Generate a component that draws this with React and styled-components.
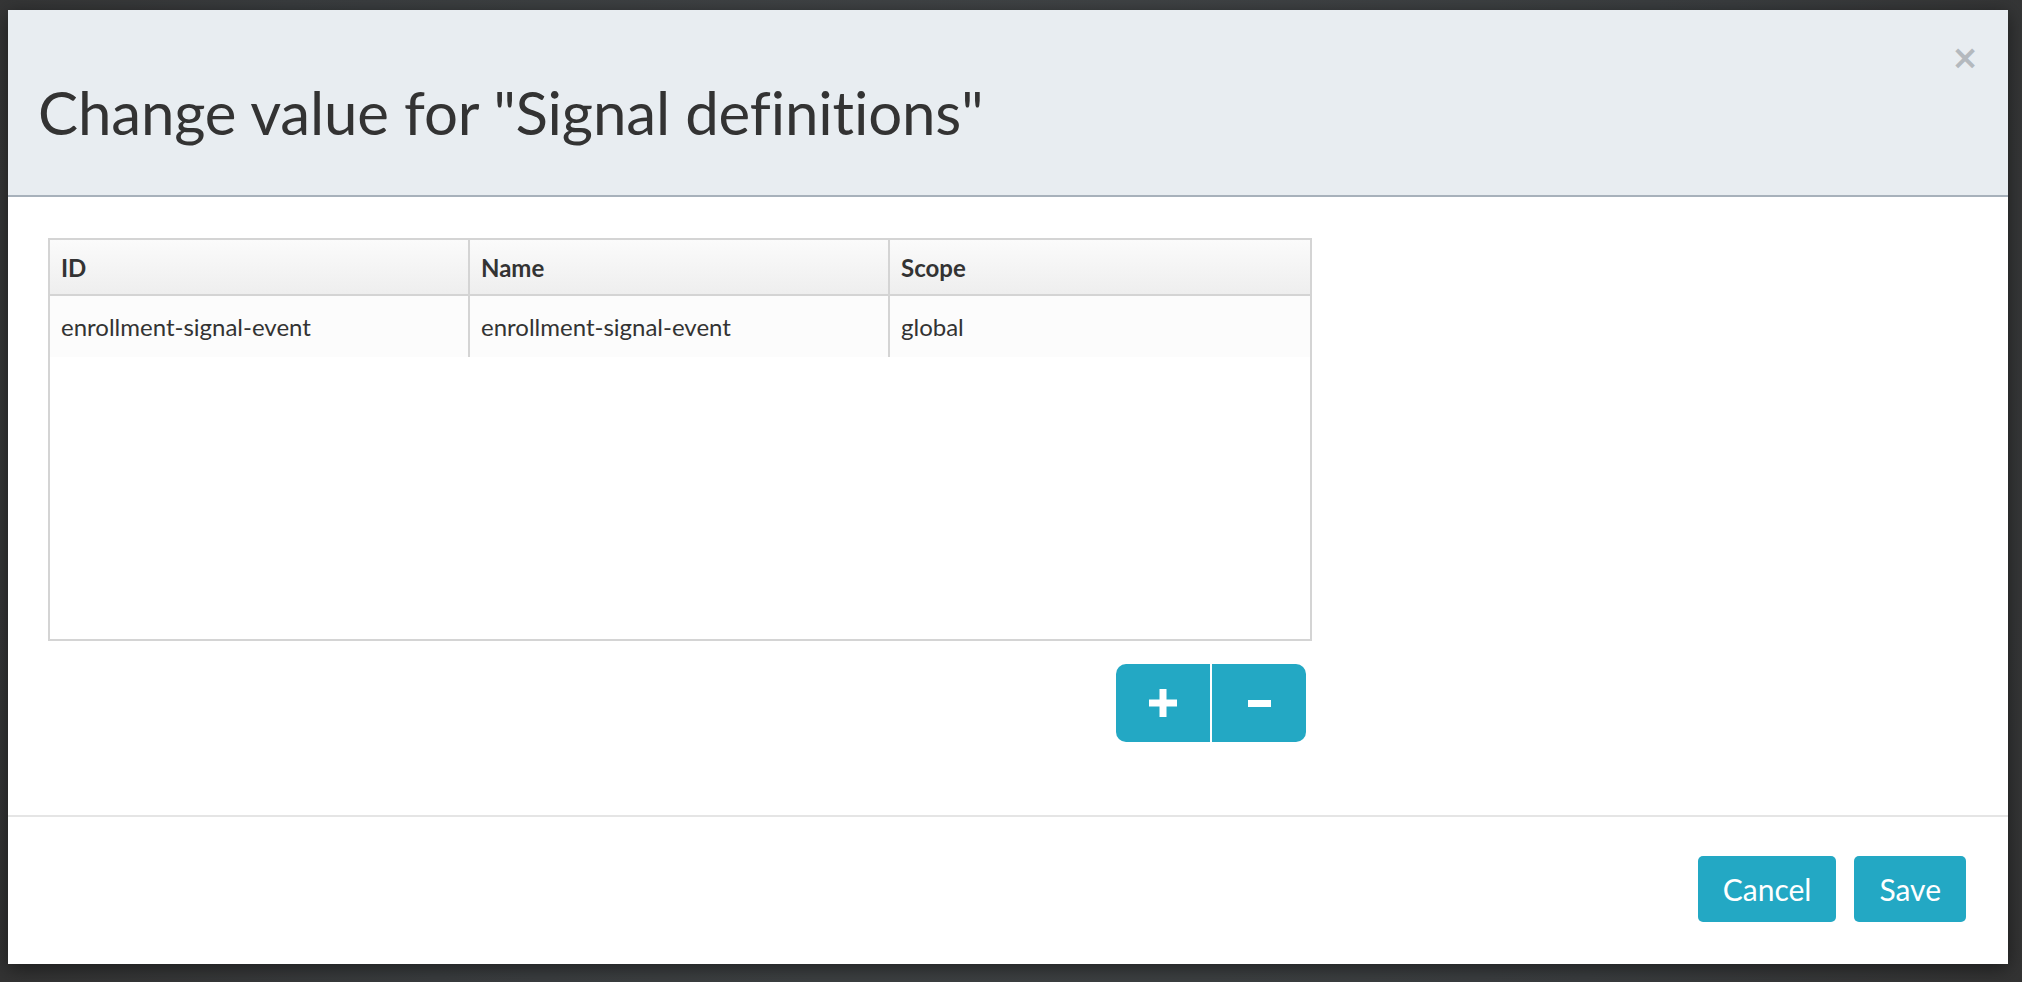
import React from 'react';
import styled, { createGlobalStyle } from 'styled-components';

const GlobalStyle = createGlobalStyle`
  html, body {
    margin: 0;
    padding: 0;
    background: #3d4143;
  }

  body {
    font-family: Lato, "Open Sans", "Liberation Sans", sans-serif;
    color: #333;
  }
`;

const Backdrop = styled.div`
  width: 2022px;
  height: 982px;
  box-sizing: border-box;
  padding: 10px 14px 18px 8px;
  display: flex;
  background: radial-gradient(circle at 50% 40%, #45494b 0%, #3a3d3f 70%, #333 100%);
`;

const Modal = styled.div`
  flex: 1;
  display: flex;
  flex-direction: column;
  background: #fff;
  box-shadow: 0 4px 18px rgba(0, 0, 0, 0.5);
`;

const Header = styled.div`
  height: 185px;
  display: flex;
  align-items: flex-start;
  justify-content: space-between;
  padding: 0 29px 0 30px;
  background: #e8edf1;
  border-bottom: 2px solid #a7b1bb;
`;

const Title = styled.h1`
  margin: 66px 0 0;
  font-size: 60px;
  font-weight: 400;
  line-height: 72px;
  color: #333;
  letter-spacing: -0.15px;
`;

const Close = styled.button`
  margin-top: 31px;
  padding: 0;
  border: 0;
  background: none;
  font-family: "DejaVu Sans", sans-serif;
  font-size: 33px;
  font-weight: 700;
  line-height: 1;
  color: #b4b9be;
  cursor: pointer;
`;

const Body = styled.div`
  flex: 1;
  padding: 41px 40px 0;
`;

const Grid = styled.div`
  width: 1264px;
  height: 403px;
  box-sizing: border-box;
  border: 2px solid #d4d4d4;
  display: grid;
  grid-template-columns: 420px 420px 1fr;
  grid-template-rows: 56px 61px;
  align-content: start;
`;

const HeadCell = styled.div`
  display: flex;
  align-items: center;
  padding: 0 11px;
  font-size: 24px;
  font-weight: 700;
  background: linear-gradient(#fbfbfb, #eeeeee);
  border-bottom: 2px solid #d4d4d4;
  border-right: ${(p) => (p.last ? 'none' : '2px solid #d4d4d4')};
`;

const Cell = styled.div`
  display: flex;
  align-items: center;
  padding: 0 11px;
  font-size: 24px;
  background: #fcfcfc;
  border-right: ${(p) => (p.last ? 'none' : '2px solid #d4d4d4')};
`;

const Actions = styled.div`
  width: 1258px;
  margin-top: 23px;
  display: flex;
  justify-content: flex-end;
`;

const GroupButton = styled.button`
  width: 94px;
  height: 78px;
  display: flex;
  align-items: center;
  justify-content: center;
  border: 0;
  padding: 0;
  background: #23a8c4;
  border-radius: ${(p) => (p.first ? '10px 0 0 10px' : '0 10px 10px 0')};
  margin-left: ${(p) => (p.first ? '0' : '2px')};
  cursor: pointer;
`;

const Footer = styled.div`
  height: 147px;
  display: flex;
  align-items: center;
  justify-content: flex-end;
  gap: 18px;
  padding: 0 42px 0 0;
  border-top: 2px solid #e5e5e5;
`;

const Button = styled.button`
  height: 66px;
  padding: 0 25px;
  margin-top: -3px;
  border: 0;
  border-radius: 5px;
  background: #23a8c4;
  color: #fff;
  font-family: Lato, "Open Sans", sans-serif;
  font-size: 30px;
  cursor: pointer;
`;

const rows = [
  { id: 'enrollment-signal-event', name: 'enrollment-signal-event', scope: 'global' },
];

const PlusIcon = () => (
  <svg width="28" height="28" viewBox="0 0 28 28">
    <rect x="0" y="10.5" width="28" height="7" fill="#fff" />
    <rect x="10.5" y="0" width="7" height="28" fill="#fff" />
  </svg>
);

const MinusIcon = () => (
  <svg width="23" height="7" viewBox="0 0 23 7">
    <rect x="0" y="0" width="23" height="7" fill="#fff" />
  </svg>
);

const App = () => (
  <>
    <GlobalStyle />
    <Backdrop>
      <Modal>
        <Header>
          <Title>Change value for "Signal definitions"</Title>
          <Close aria-label="Close">×</Close>
        </Header>

        <Body>
          <Grid>
            <HeadCell>ID</HeadCell>
            <HeadCell>Name</HeadCell>
            <HeadCell last>Scope</HeadCell>
            {rows.map((r) => (
              <React.Fragment key={r.id}>
                <Cell>{r.id}</Cell>
                <Cell>{r.name}</Cell>
                <Cell last>{r.scope}</Cell>
              </React.Fragment>
            ))}
          </Grid>
          <Actions>
            <GroupButton first aria-label="Add"><PlusIcon /></GroupButton>
            <GroupButton aria-label="Remove"><MinusIcon /></GroupButton>
          </Actions>
        </Body>

        <Footer>
          <Button>Cancel</Button>
          <Button>Save</Button>
        </Footer>
      </Modal>
    </Backdrop>
  </>
);

export default App;
